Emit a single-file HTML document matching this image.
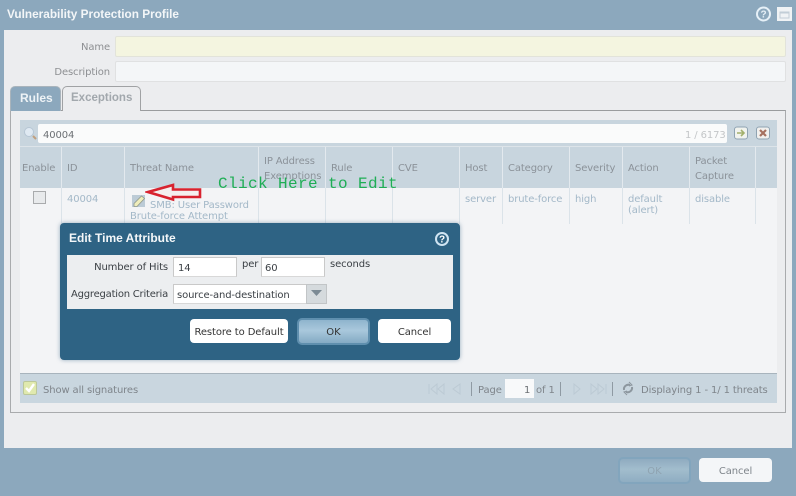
<!DOCTYPE html>
<html><head><meta charset="utf-8"><style>
html,body{margin:0;padding:0}
body{width:796px;height:496px;position:relative;overflow:hidden;background:#8ca8bd;font-family:"DejaVu Sans","Liberation Sans",sans-serif;font-size:10px;color:#8a8f94}
div,span{position:absolute;box-sizing:border-box}
.t{white-space:nowrap;line-height:14px;letter-spacing:-.12px;margin-top:2px}
.b{font-family:"Liberation Sans",sans-serif;font-weight:bold;margin-top:1px;letter-spacing:0}
.h{color:#8b9299}
.v{color:#a3b8c8}
.s{background:#dbe3e9;width:1px;top:188px;height:36px}
.hs{background:#e3e9ee;width:1px;top:147px;height:41px}
.d{color:#3a3f44}
.in{background:#fff;border:1px solid #c9c9c9;border-bottom-color:#d8d8d8}
.btn{background:#fff;border-radius:4px;color:#333;text-align:center;line-height:28px;white-space:nowrap;letter-spacing:-.1px}
.ok{background:linear-gradient(#8fb4cd,#a9c8dc 45%,#84aac4);border:2px solid #5f8fae;border-radius:5px;color:#333;text-align:center;line-height:25px}
</style></head><body>
<div class="t b" style="left:7px;top:6px;font-size:11.800px;color:#f3f6f8">Vulnerability Protection Profile</div>
<svg style="position:absolute;left:755px;top:5px" width="38" height="18"><circle cx="8.500" cy="9" r="6.500" fill="#8ca8bd" stroke="#e6f0f7" stroke-width="2"/><text x="8.500" y="12.500" font-family="Liberation Sans" font-size="10" font-weight="bold" fill="#e6f0f7" text-anchor="middle">?</text><rect x="22" y="2" width="15" height="14" fill="#f0f3f5"/><rect x="25" y="7" width="9" height="6" fill="none" stroke="#c2ced7"/><rect x="25" y="7" width="9" height="1.500" fill="#c2ced7"/></svg>

<div style="left:4px;top:30px;width:788px;height:418px;background:#ecedef"></div>
<div class="t" style="right:686px;top:39px;color:#8d8f92">Name</div>
<div style="left:115px;top:36px;width:671px;height:21px;background:#f4f5e0;border:1px solid #e2e3da;border-radius:2px"></div>
<div class="t" style="right:686px;top:64px;color:#8d8f92">Description</div>
<div style="left:115px;top:61px;width:671px;height:21px;background:#f4f6f8;border:1px solid #e0e1e2;border-radius:2px"></div>

<div style="left:10px;top:110px;width:776px;height:303px;border:1px solid #a9abad;border-top-color:#9a9c9e"></div>
<div style="left:10px;top:86px;width:51px;height:25px;background:#8ca8bd;border:1px solid #a9b4bc;border-bottom:0;border-radius:5px 5px 0 0"></div>
<div class="t b" style="left:20px;top:90px;font-size:12px;color:#eef3f6">Rules</div>
<div style="left:62px;top:86px;width:79px;height:25px;background:#ecedef;border:1px solid #a0a2a4;border-bottom:0;border-radius:5px 5px 0 0"></div>
<div class="t b" style="left:71px;top:90px;font-size:11.500px;color:#a2a8ad">Exceptions</div>

<div style="left:20px;top:120px;width:757px;height:283px;background:#f3f4f6"></div>
<div style="left:20px;top:120px;width:757px;height:68px;background:#c8d5de"></div>
<div style="left:20px;top:146px;width:757px;height:1px;background:#dde4e9"></div>
<div style="left:38px;top:124px;width:689px;height:19px;background:#fafbfb;border-radius:2px"></div>
<svg style="position:absolute;left:23px;top:126px" width="15" height="15"><circle cx="6" cy="6" r="4.500" fill="#dfe9f2" stroke="#b6c6d4"/><path d="M10 10l3 3" stroke="#c0a080" stroke-width="2"/></svg>
<div class="t" style="left:43px;top:127px;color:#6c7074">40004</div>
<div class="t" style="left:685px;top:127px;color:#c3c6c8">1 / 6173</div>
<svg style="position:absolute;left:733px;top:125px" width="38" height="16"><rect x="1.500" y="2" width="13" height="12" rx="2.500" fill="#f1f3ee" stroke="#8fa3b2"/><path d="M4 8h7M8 5l3 3-3 3" stroke="#a3b06c" stroke-width="1.600" fill="none"/><rect x="23.500" y="2" width="13" height="12" rx="2.500" fill="#f1f0ee" stroke="#8fa3b2"/><path d="M27 5l6 6M33 5l-6 6" stroke="#a5705f" stroke-width="2.200"/></svg>

<div class="hs" style="left:61px"></div><div class="hs" style="left:124px"></div><div class="hs" style="left:258px"></div><div class="hs" style="left:325px"></div><div class="hs" style="left:392px"></div><div class="hs" style="left:459px"></div><div class="hs" style="left:502px"></div><div class="hs" style="left:569px"></div><div class="hs" style="left:622px"></div><div class="hs" style="left:689px"></div><div class="hs" style="left:755px"></div>
<div class="s" style="left:61px"></div><div class="s" style="left:124px"></div><div class="s" style="left:258px"></div><div class="s" style="left:325px"></div><div class="s" style="left:392px"></div><div class="s" style="left:459px"></div><div class="s" style="left:502px"></div><div class="s" style="left:569px"></div><div class="s" style="left:622px"></div><div class="s" style="left:689px"></div><div class="s" style="left:755px"></div>

<div class="t h" style="left:22px;top:160px">Enable</div>
<div class="t h" style="left:67px;top:160px">ID</div>
<div class="t h" style="left:130px;top:160px">Threat Name</div>
<div class="t h" style="left:264px;top:153px">IP Address</div>
<div class="t h" style="left:264px;top:168px">Exemptions</div>
<div class="t h" style="left:331px;top:160px">Rule</div>
<div class="t h" style="left:398px;top:160px">CVE</div>
<div class="t h" style="left:465px;top:160px">Host</div>
<div class="t h" style="left:508px;top:160px">Category</div>
<div class="t h" style="left:575px;top:160px">Severity</div>
<div class="t h" style="left:628px;top:160px">Action</div>
<div class="t h" style="left:695px;top:153px">Packet</div>
<div class="t h" style="left:695px;top:168px">Capture</div>

<div style="left:33px;top:191px;width:13px;height:13px;background:#e8eaec;border:1px solid #a9abad"></div>
<div class="t v" style="left:67px;top:191px">40004</div>
<svg style="position:absolute;left:131px;top:194px" width="15" height="14"><rect x="1" y="1" width="13" height="12" fill="#bccbd6"/><path d="M3 12.500V9.500L10.500 2 13.500 4.500 6 12.500Z" fill="#efedbb" stroke="#8e968a" stroke-width=".8"/></svg>
<div class="t v" style="left:150px;top:197px">SMB: User Password</div>
<div class="t v" style="left:130px;top:208px">Brute-force Attempt</div>
<div class="t v" style="left:465px;top:191px">server</div>
<div class="t v" style="left:508px;top:191px">brute-force</div>
<div class="t v" style="left:575px;top:191px">high</div>
<div class="t v" style="left:628px;top:191px">default</div>
<div class="t v" style="left:628px;top:202px">(alert)</div>
<div class="t v" style="left:695px;top:191px">disable</div>

<svg style="position:absolute;left:145px;top:182px" width="58" height="20"><path d="M3 10L28 3V7.500H55V15H28V17.500Z" fill="#f4f0ef" stroke="#d8232f" stroke-width="2.600"/></svg>
<div class="t" style="left:218px;top:176px;margin-top:1px;font-family:'Liberation Mono',monospace;font-size:16px;color:#1fae55;letter-spacing:.4px">Click Here to Edit</div>

<div style="left:20px;top:373px;width:757px;height:30px;background:#c9d6df;border-top:1px solid #a8b4bd"></div>
<div style="left:23px;top:381px;width:14px;height:14px;background:#e0e9ae;border:1px solid #bcc89a;border-radius:2px"></div>
<svg style="position:absolute;left:23px;top:381px" width="14" height="14"><path d="M3 7l3 3 5-7" stroke="#fff" stroke-width="2.400" fill="none"/></svg>
<div class="t" style="left:43px;top:382px;color:#7f858b">Show all signatures</div>
<svg style="position:absolute;left:420px;top:379px" width="195" height="20" fill="none" stroke="#bccad4"><path d="M9 5v10M17 5L11 10l6 5zM24 5l-6 5 6 5zM40 5l-7 5 7 5z"/><path d="M154 5l6 5-6 5zM171 5l6 5-6 5zM178 5l6 5-6 5zM186 5v10"/><path d="M51.500 3v14M140.500 3v14M192.500 3v14" stroke="#8f9aa3"/></svg>
<div class="t" style="left:478px;top:382px;color:#7f858b">Page</div>
<div style="left:505px;top:379px;width:29px;height:19px;background:#f8f9fa"></div>
<div class="t" style="left:524px;top:382px;color:#6c7074">1</div>
<div class="t" style="left:536px;top:382px;color:#7f858b">of 1</div>
<svg style="position:absolute;left:621px;top:381px" width="14" height="15" fill="none" stroke="#8d979f" stroke-width="2"><path d="M3 9a4.500 4.500 0 0 1 6-5M11 6a4.500 4.500 0 0 1-6 5"/><path d="M8 1l3 3-3 1M6 14l-3-3 3-1" stroke-width="1"/></svg>
<div class="t" style="left:641px;top:382px;color:#7f858b">Displaying 1 - 1/ 1 threats</div>

<div style="left:60px;top:223px;width:400px;height:137px;background:#2e6384;border-radius:4px;box-shadow:0 0 4px rgba(70,110,140,.55)"></div>
<div class="t b" style="left:69px;top:230px;font-size:12px;color:#f4f7f9">Edit Time Attribute</div>
<svg style="position:absolute;left:434px;top:231px" width="16" height="16"><circle cx="8" cy="8" r="6" fill="#2e6384" stroke="#cfe4f2" stroke-width="2"/><text x="8" y="11.500" font-family="Liberation Sans" font-size="10" font-weight="bold" fill="#fff" text-anchor="middle">?</text></svg>
<div style="left:67px;top:255px;width:386px;height:54px;background:#eceef0"></div>
<div class="t d" style="right:628px;top:259px">Number of Hits</div>
<div class="in" style="left:173px;top:257px;width:64px;height:20px"></div>
<div class="t d" style="left:178px;top:260px">14</div>
<div class="t d" style="left:242px;top:256px">per</div>
<div class="in" style="left:261px;top:257px;width:64px;height:20px"></div>
<div class="t d" style="left:265px;top:260px">60</div>
<div class="t d" style="left:330px;top:256px">seconds</div>
<div class="t d" style="right:628px;top:286px;letter-spacing:-.22px">Aggregation Criteria</div>
<div class="in" style="left:173px;top:284px;width:154px;height:20px"></div>
<div style="left:306px;top:284px;width:21px;height:20px;background:#d5dadd;border:1px solid #c2c5c7"></div>
<svg style="position:absolute;left:311px;top:289px" width="12" height="8"><path d="M0 1h11L5.500 7z" fill="#7c8a94"/></svg>
<div class="t d" style="left:177px;top:287px">source-and-destination</div>
<div class="btn" style="left:190px;top:319px;width:98px;height:24px">Restore to Default</div>
<div class="ok" style="left:297px;top:318px;width:73px;height:27px">OK</div>
<div class="btn" style="left:378px;top:319px;width:73px;height:24px">Cancel</div>

<div class="ok" style="left:618px;top:457px;width:73px;height:27px;background:linear-gradient(#8fabc0,#a2bdcd 45%,#8fadc2);border-color:#82a5bd;color:#8fa3b1">OK</div>
<div class="btn" style="left:699px;top:458px;width:73px;height:24px;background:#f4f6f8;color:#7f858b">Cancel</div>
</body></html>
